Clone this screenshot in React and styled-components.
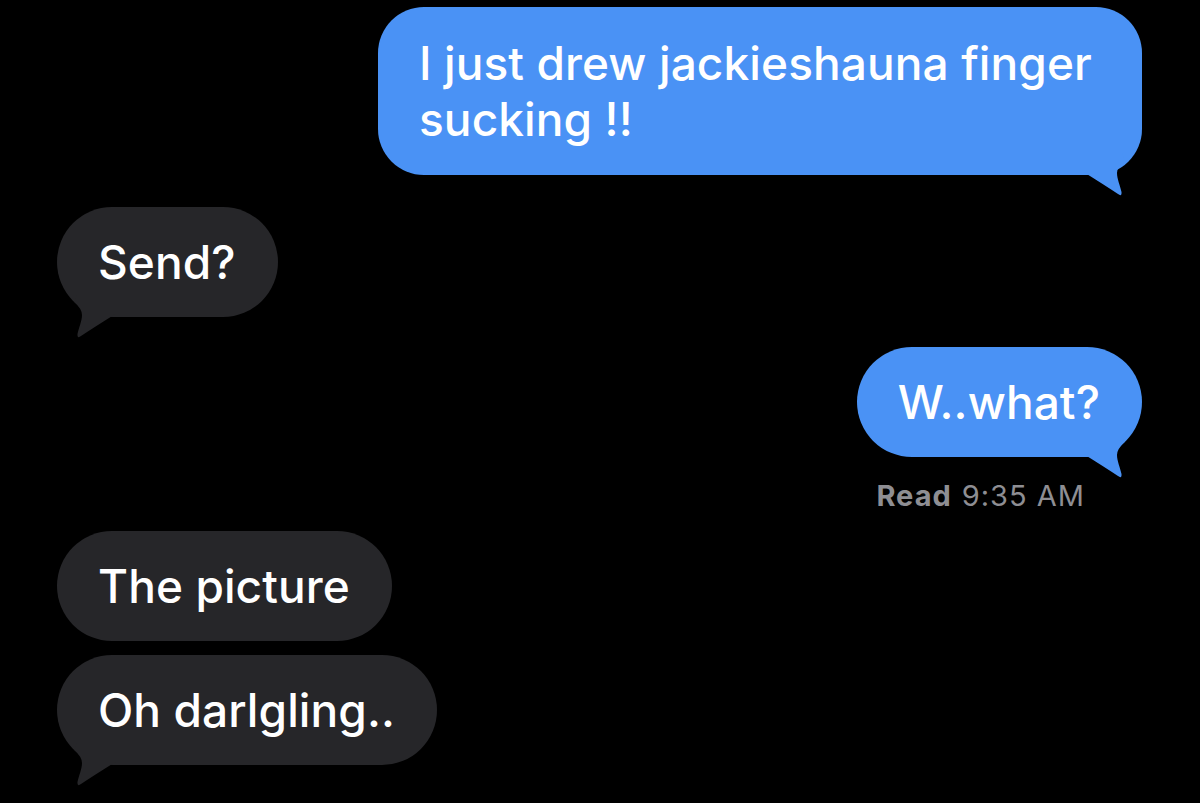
import styled, { createGlobalStyle } from "styled-components";

const GlobalStyle = createGlobalStyle`
  html, body {
    margin: 0;
    padding: 0;
    background: #000;
  }
  body {
    font-family: Inter, "Liberation Sans", Arial, sans-serif;
  }
`;

const BLUE = "#4a92f5";
const GREY = "#262629";

const Thread = styled.div`
  display: flex;
  flex-direction: column;
  width: 1200px;
  height: 803px;
  box-sizing: border-box;
  padding: 7px 58px 0 57px;
  background: #000;
  overflow: hidden;
`;

const Row = styled.div`
  display: flex;
  justify-content: ${({ $mine }) => ($mine ? "flex-end" : "flex-start")};
  margin-top: ${({ $gap }) => $gap || 0}px;
`;

const Bubble = styled.div`
  position: relative;
  box-sizing: border-box;
  max-width: 764px;
  padding: ${({ $multi }) => ($multi ? "28px 42px 28px 41px" : "27px 42px 27px 41px")};
  border-radius: ${({ $multi }) => ($multi ? 46 : 55)}px;
  background: ${({ $mine }) => ($mine ? BLUE : GREY)};
  color: #fff;
  font-size: 46px;
  font-weight: 500;
  line-height: 56px;
  letter-spacing: 0.1px;
`;

const TailSvg = styled.svg`
  position: absolute;
  bottom: -22px;
  width: 60px;
  height: 52px;
  ${({ $mine }) =>
    $mine ? "right: 0;" : "left: 0; transform: scaleX(-1);"}
`;

// tail drawn from the bubble's bottom corner; the grey one is mirrored
const Tail = ({ mine }) => (
  <TailSvg $mine={mine} viewBox="0 0 60 52">
    <path
      d="M0 26 Q24 41 36 49 Q40 52 39.5 47 C38 40 35 34 35 28 Q35 22 42.7 15 L40 8 L0 8 Z"
      fill={mine ? BLUE : GREY}
    />
  </TailSvg>
);

const Receipt = styled.div`
  display: flex;
  justify-content: flex-end;
  gap: 10px;
  margin: 22px 57px 0 0;
  font-size: 29px;
  line-height: 34px;
  letter-spacing: 1px;
  color: #8e8e93;
`;

const Strong = styled.span`
  font-weight: 700;
`;

const Message = ({ mine, tail, multi, gap, children }) => (
  <Row $mine={mine} $gap={gap}>
    <Bubble $mine={mine} $multi={multi}>
      {children}
      {tail && <Tail mine={mine} />}
    </Bubble>
  </Row>
);

const App = () => (
  <>
    <GlobalStyle />
    <Thread>
      <Message mine tail multi>
        I just drew jackieshauna finger sucking !!
      </Message>
      <Message tail gap={32}>
        Send?
      </Message>
      <Message mine tail gap={30}>
        W..what?
      </Message>
      <Receipt>
        <Strong>Read</Strong>
        <span>9:35 AM</span>
      </Receipt>
      <Message gap={18}>The picture</Message>
      <Message tail gap={14}>
        Oh darlgling..
      </Message>
    </Thread>
  </>
);

export default App;
